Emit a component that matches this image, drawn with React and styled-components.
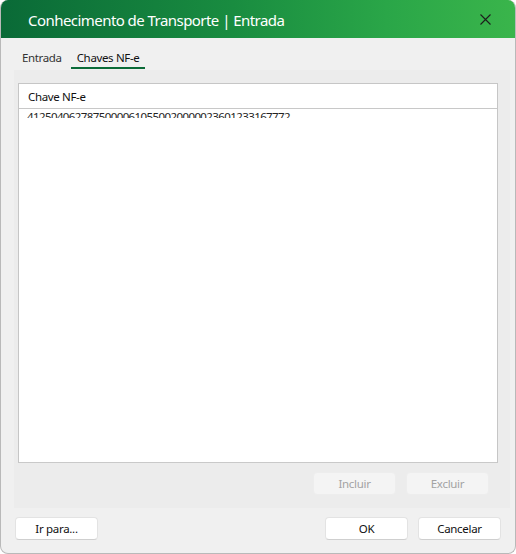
import React from "react";
import styled, { createGlobalStyle } from "styled-components";

const Global = createGlobalStyle`
  html, body { margin: 0; padding: 0; background: #ffffff; }
  body { font-family: "Noto Sans", "Open Sans", sans-serif; }
  * { box-sizing: border-box; }
`;

const Window = styled.div`
  width: 516px;
  height: 554px;
  background: #f0f0f0;
  border-radius: 8px;
  border: 1px solid #b9b9b9;
  border-top: none;
  overflow: hidden;
  display: flex;
  flex-direction: column;
`;

const TitleBar = styled.div`
  height: 38px;
  flex: none;
  background: linear-gradient(90deg, #0a6a37 0%, #198c40 45%, #2aa648 75%, #3ab54b 100%);
  display: flex;
  align-items: center;
  padding: 0 20px 0 27px;
  color: #ffffff;
`;

const Title = styled.div`
  flex: 1;
  font-size: 15px;
  letter-spacing: -0.55px;
  line-height: 20px;
  margin-top: 1px;
`;

const Close = styled.div`
  width: 14px;
  height: 14px;
  display: flex;
  align-items: center;
  justify-content: center;
  margin-right: 3px;
`;

const Body = styled.div`
  flex: 1;
  display: flex;
  flex-direction: column;
  padding: 12px 13px 13px 13px;
`;

const Tabs = styled.div`
  display: flex;
  gap: 10px;
  padding-left: 8px;
  height: 20px;
`;

const Tab = styled.div`
  font-size: 11.5px;
  letter-spacing: -0.35px;
  line-height: 16px;
  color: ${(p) => (p.$active ? "#111111" : "#333333")};
  padding: 0 ${(p) => (p.$active ? "6px" : "0")};
  border-bottom: 2px solid ${(p) => (p.$active ? "#0b6b38" : "transparent")};
  height: 19px;
  margin-left: ${(p) => (p.$active ? "-1px" : "0")};
`;

const Panel = styled.div`
  margin-left: 0;
  margin-right: -8px;
  background: #ececec;
  height: 438px;
  padding: 13px 12px 0 4px;
  display: flex;
  flex-direction: column;
`;

const List = styled.div`
  height: 380px;
  background: #ffffff;
  border: 1px solid #c6c6c6;
  border-bottom-color: #c9c9c9;
  display: flex;
  flex-direction: column;
`;

const Header = styled.div`
  height: 25px;
  border-bottom: 1px solid #c8c8c8;
  font-size: 11.5px;
  letter-spacing: -0.35px;
  color: #111111;
  padding-left: 9px;
  display: flex;
  align-items: center;
`;

const Row = styled.div`
  height: 9px;
  overflow: hidden;
  padding-left: 8px;
  font-size: 11.5px;
  letter-spacing: -0.6px;
  color: #222222;
  line-height: 16px;
  & > span { display: block; }
`;

const ActionRow = styled.div`
  display: flex;
  justify-content: flex-end;
  gap: 10px;
  padding-top: 9px;
  padding-right: 9px;
`;

const Button = styled.button`
  width: 83px;
  height: 23px;
  border-radius: 4px;
  font-family: "Noto Sans", "Open Sans", sans-serif;
  font-size: 11.5px;
  letter-spacing: -0.3px;
  padding: 0;
  line-height: 20px;
  cursor: default;
  background: ${(p) => (p.disabled ? "#f4f4f4" : "#ffffff")};
  color: ${(p) => (p.disabled ? "#a3a3a3" : "#111111")};
  border: 1px solid ${(p) => (p.disabled ? "#ededed" : "#e3e3e3")};
  border-bottom-color: ${(p) => (p.disabled ? "#ededed" : "#cfcfcf")};
`;

const Footer = styled.div`
  display: flex;
  align-items: center;
  gap: 10px;
  margin-top: 9px;
  margin-left: 1px;
  margin-right: 1px;
`;

const Spacer = styled.div`
  flex: 1;
`;

export default function App() {
  return (
    <>
      <Global />
      <Window>
        <TitleBar>
          <Title>Conhecimento de Transporte | Entrada</Title>
          <Close>
            <svg width="11" height="11" viewBox="0 0 11 11">
              <path d="M0.5 0.5 L10.5 10.5 M10.5 0.5 L0.5 10.5" stroke="#1d1d1d" strokeWidth="1.1" fill="none" />
            </svg>
          </Close>
        </TitleBar>
        <Body>
          <Tabs>
            <Tab>Entrada</Tab>
            <Tab $active>Chaves NF-e</Tab>
          </Tabs>
          <Panel>
            <List>
              <Header>Chave NF-e</Header>
              <Row>
                <span>41250406278750000610550020000023601233167772</span>
              </Row>
            </List>
            <ActionRow>
              <Button disabled>Incluir</Button>
              <Button disabled>Excluir</Button>
            </ActionRow>
          </Panel>
          <Footer>
            <Button>Ir para...</Button>
            <Spacer />
            <Button>OK</Button>
            <Button>Cancelar</Button>
          </Footer>
        </Body>
      </Window>
    </>
  );
}
